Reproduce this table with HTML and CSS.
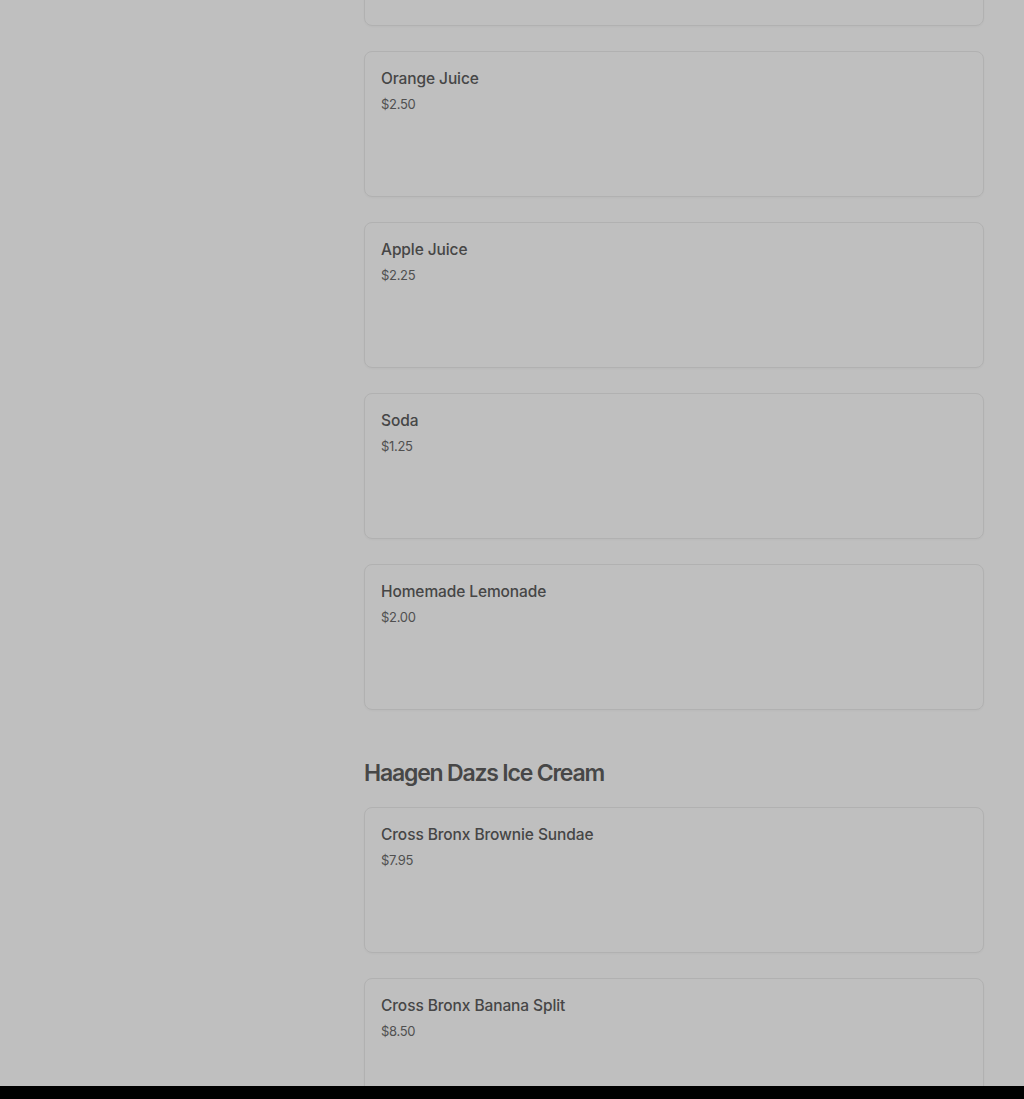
FILE: index.html
```html
<!DOCTYPE html>
<html lang="en">
<head>
  <meta charset="UTF-8" />
  <meta name="viewport" content="width=device-width, initial-scale=1.0"/>
  <title>Menu</title>
  <link rel="stylesheet" href="styles.css">
</head>
<body>
  <!-- Dimmed page behind a modal -->
  <div class="backdrop">
    <div class="menu-layout">
      <aside class="sidebar"></aside>

      <main class="menu">
        <!-- Beverages (scrolled past the title) -->
        <section class="menu-section">
          <div class="item-list">
            <div class="item-card"></div>
            <div class="item-card">
              <div class="item-name">Orange Juice</div>
              <div class="item-price">$2.50</div>
            </div>
            <div class="item-card">
              <div class="item-name">Apple Juice</div>
              <div class="item-price">$2.25</div>
            </div>
            <div class="item-card">
              <div class="item-name">Soda</div>
              <div class="item-price">$1.25</div>
            </div>
            <div class="item-card">
              <div class="item-name">Homemade Lemonade</div>
              <div class="item-price">$2.00</div>
            </div>
          </div>
        </section>

        <section class="menu-section">
          <h2 class="section-title">Haagen Dazs Ice Cream</h2>
          <div class="item-list">
            <div class="item-card">
              <div class="item-name">Cross Bronx Brownie Sundae</div>
              <div class="item-price">$7.95</div>
            </div>
            <div class="item-card">
              <div class="item-name">Cross Bronx Banana Split</div>
              <div class="item-price">$8.50</div>
            </div>
          </div>
        </section>
      </main>
    </div>
  </div>
</body>
</html>
```

FILE: styles.css
```css
/* Reset */
* {
  margin: 0;
  padding: 0;
  box-sizing: border-box;
}
html,
body {
  height: 100%;
}
body {
  font-family: 'Inter', 'Roboto', sans-serif;
  background: #000;
  overflow: hidden;
}

/* Grey overlay that covers the page */
.backdrop {
  height: 1086px;
  background: #bfbfbf;
  overflow: hidden;
}

/* Two columns: empty sidebar + menu */
.menu-layout {
  display: grid;
  grid-template-columns: 364px 620px;
}
.menu {
  margin-top: -120px; /* page is scrolled down */
}

/* Sections */
.menu-section + .menu-section {
  margin-top: 47px;
}
.section-title {
  font-family: 'Inter', sans-serif;
  font-size: 23px;
  line-height: 32px;
  font-weight: 600;
  letter-spacing: -1.2px;
  color: #474747;
  margin-bottom: 18px;
}

/* Item cards */
.item-list {
  display: flex;
  flex-direction: column;
  gap: 25px;
}
.item-card {
  height: 146px;
  padding: 15px 16px;
  border: 1px solid #b1b1b1;
  border-radius: 8px;
  box-shadow: 0 1px 2px rgba(0,0,0,0.03);
}
.item-name {
  font-size: 15.5px;
  line-height: 24px;
  font-weight: 500;
  letter-spacing: -0.1px;
  color: #464646;
}
.item-price {
  margin-top: 3px;
  font-size: 13px;
  line-height: 20px;
  letter-spacing: -0.3px;
  color: #505050;
}
```
